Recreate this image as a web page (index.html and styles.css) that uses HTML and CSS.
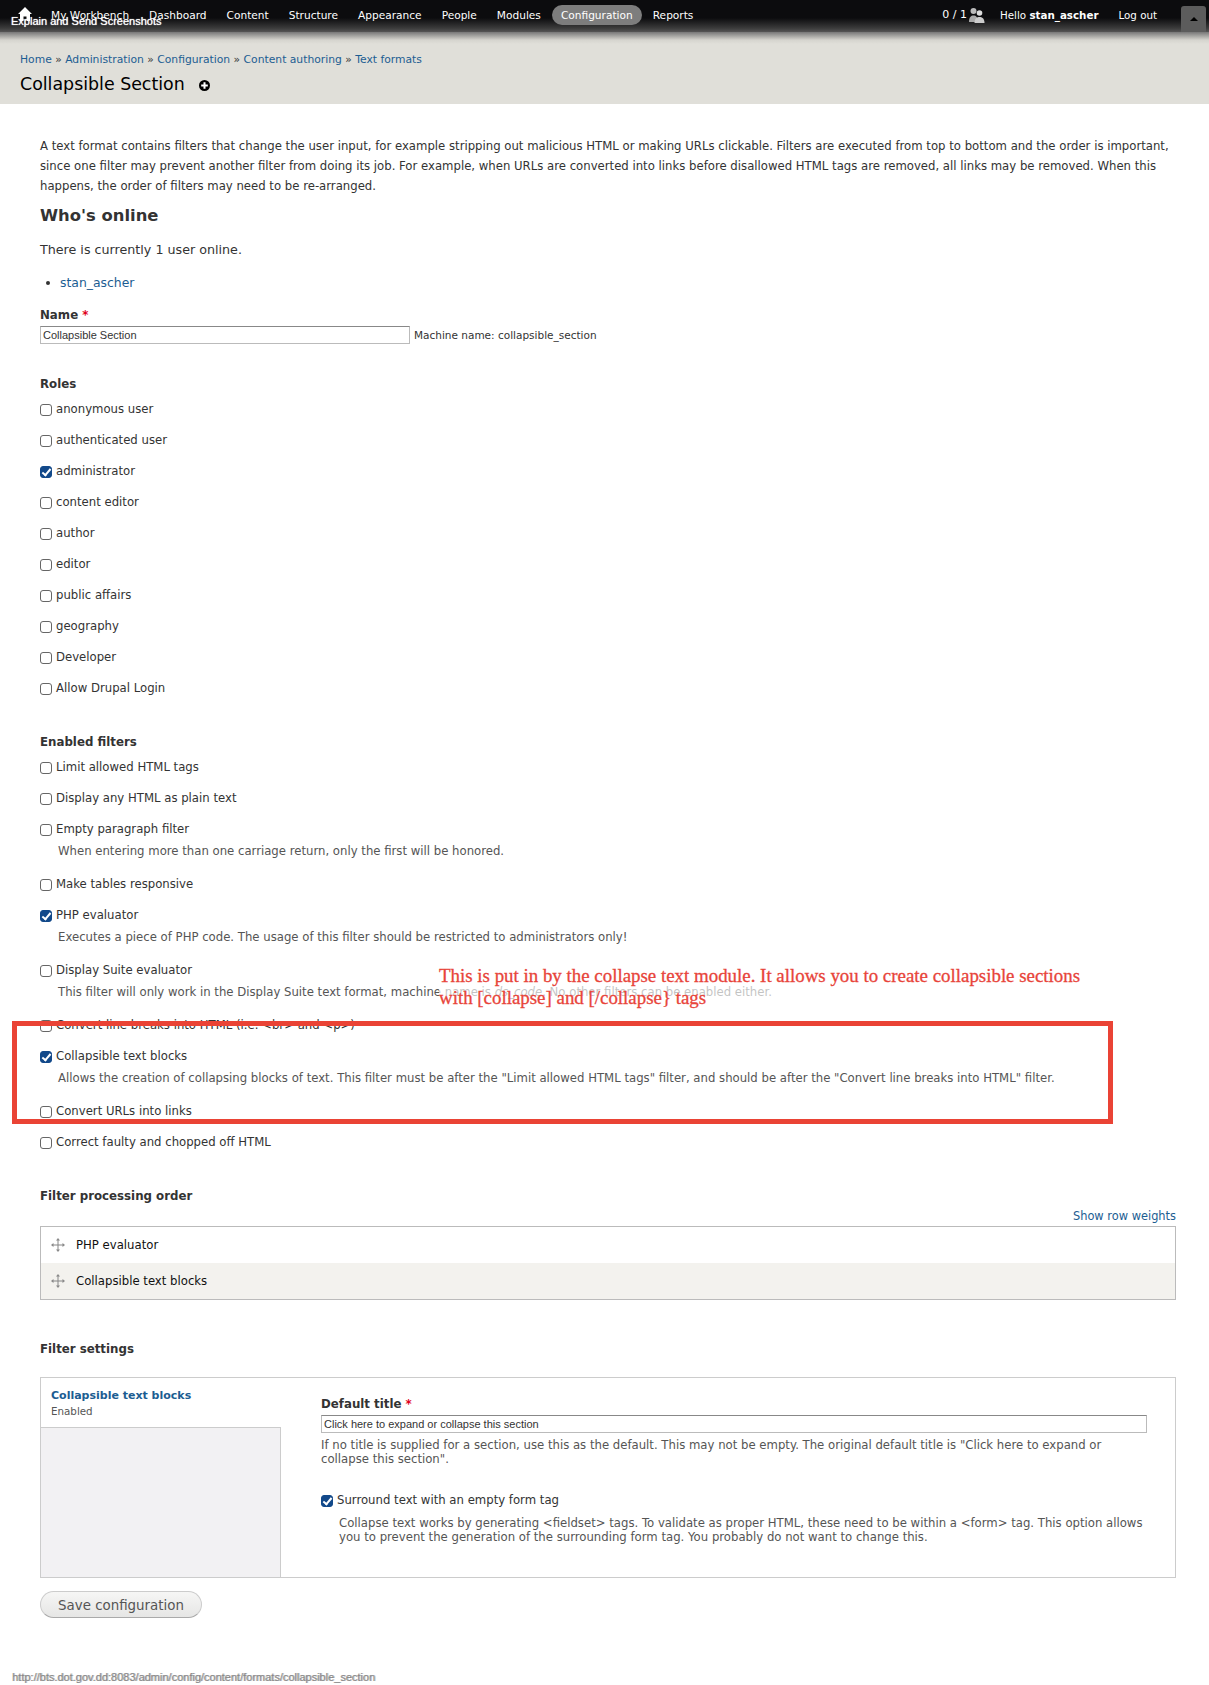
FILE: index.html
```html
<!DOCTYPE html>
<html lang="en">

<head>
    <meta charset="UTF-8">
    <title>Collapsible Section</title>
    <link rel="stylesheet" href="styles.css">
</head>

<body>

    <!-- toolbar -->
    <div class="toolbar">
        <a class="home" href="#"><svg width="16" height="16" viewBox="0 0 16 16"><path fill="#fff" d="M8 1 15 8 13 8 13 15 9.500 15 9.500 10.500 6.500 10.500 6.500 15 3 15 3 8 1 8Z"/></svg></a>
        <ul class="nav">
            <li><a href="#">My Workbench</a></li>
            <li><a href="#">Dashboard</a></li>
            <li><a href="#">Content</a></li>
            <li><a href="#">Structure</a></li>
            <li><a href="#">Appearance</a></li>
            <li><a href="#">People</a></li>
            <li><a href="#">Modules</a></li>
            <li><a class="active" href="#">Configuration</a></li>
            <li><a href="#">Reports</a></li>
        </ul>
        <div class="user-links">
            <span class="count">0 / 1<svg width="17" height="16" viewBox="0 0 17 16"><circle cx="5.500" cy="4" r="3" fill="#bbb"/><path fill="#aaa" d="M1 15C1 10 3 8.500 5.500 8.500S10 10 10 15Z"/><circle cx="11.500" cy="6" r="2.800" fill="#ddd"/><path fill="#ccc" d="M6.500 16C6.500 11.500 9 10 11.500 10S16.500 11.500 16.500 16Z"/></svg></span>
            <a href="#">Hello <b>stan_ascher</b></a>
            <a href="#">Log out</a>
        </div>
        <div class="toggle"><span class="arrow"></span></div>
    </div>
    <div class="explain">Explain and Send Screenshots</div>

    <!-- page title -->
    <div class="head">
        <div class="crumbs"><a href="#">Home</a> » <a href="#">Administration</a> » <a href="#">Configuration</a> » <a href="#">Content authoring</a> » <a href="#">Text formats</a></div>
        <h1>Collapsible Section <svg class="shortcut" width="11" height="11" viewBox="0 0 11 11"><circle cx="5.500" cy="5.500" r="5.500" fill="#000"/><path fill="#fff" d="M4.500 2.200h2v2.300h2.300v2H6.500v2.300h-2V6.500H2.200v-2h2.300Z"/></svg></h1>
    </div>

    <div class="content">
        <p class="intro">A text format contains filters that change the user input, for example stripping out malicious HTML or making URLs clickable. Filters are executed from top to bottom and the order is important, since one filter may prevent another filter from doing its job. For example, when URLs are converted into links before disallowed HTML tags are removed, all links may be removed. When this happens, the order of filters may need to be re-arranged.</p>

        <h2>Who's online</h2>
        <p class="online">There is currently 1 user online.</p>
        <ul class="users">
            <li><a href="#">stan_ascher</a></li>
        </ul>

        <label class="title name-title">Name <span class="req">*</span></label>
        <div class="name-row">
            <input class="text name-input" type="text" value="Collapsible Section">
            <span class="machine">Machine name: collapsible_section</span>
        </div>

        <div class="title roles-title">Roles</div>
        <div class="checks">
            <label class="check"><input type="checkbox">anonymous user</label>
            <label class="check"><input type="checkbox">authenticated user</label>
            <label class="check"><input type="checkbox" checked>administrator</label>
            <label class="check"><input type="checkbox">content editor</label>
            <label class="check"><input type="checkbox">author</label>
            <label class="check"><input type="checkbox">editor</label>
            <label class="check"><input type="checkbox">public affairs</label>
            <label class="check"><input type="checkbox">geography</label>
            <label class="check"><input type="checkbox">Developer</label>
            <label class="check"><input type="checkbox">Allow Drupal Login</label>
        </div>

        <div class="title filters-title">Enabled filters</div>
        <div class="checks">
            <label class="check"><input type="checkbox">Limit allowed HTML tags</label>
            <label class="check"><input type="checkbox">Display any HTML as plain text</label>
            <label class="check has-desc"><input type="checkbox">Empty paragraph filter</label>
            <div class="desc">When entering more than one carriage return, only the first will be honored.</div>
            <label class="check"><input type="checkbox">Make tables responsive</label>
            <label class="check has-desc"><input type="checkbox" checked>PHP evaluator</label>
            <div class="desc">Executes a piece of PHP code. The usage of this filter should be restricted to administrators only!</div>
            <label class="check has-desc"><input type="checkbox">Display Suite evaluator</label>
            <div class="desc">This filter will only work in the Display Suite text format, machine name is <em>ds_code</em>. No other filters can be enabled either.</div>
            <label class="check"><input type="checkbox">Convert line breaks into HTML (i.e. &lt;br&gt; and &lt;p&gt;)</label>
            <label class="check has-desc"><input type="checkbox" checked>Collapsible text blocks</label>
            <div class="desc">Allows the creation of collapsing blocks of text. This filter must be after the "Limit allowed HTML tags" filter, and should be after the "Convert line breaks into HTML" filter.</div>
            <label class="check"><input type="checkbox">Convert URLs into links</label>
            <label class="check"><input type="checkbox">Correct faulty and chopped off HTML</label>
        </div>

        <div class="title order-title">Filter processing order</div>
        <div class="weights"><a href="#">Show row weights</a></div>
        <div class="order">
            <div class="row">
                <svg class="drag" width="14" height="14" viewBox="0 0 14 14"><path fill="#888" d="M7 0 9 2.500H7.500V6.500H11.500V5L14 7 11.500 9V7.500H7.500V11.500H9L7 14 5 11.500H6.500V7.500H2.500V9L0 7 2.500 5V6.500H6.500V2.500H5Z"/></svg>
                PHP evaluator
            </div>
            <div class="row even">
                <svg class="drag" width="14" height="14" viewBox="0 0 14 14"><path fill="#888" d="M7 0 9 2.500H7.500V6.500H11.500V5L14 7 11.500 9V7.500H7.500V11.500H9L7 14 5 11.500H6.500V7.500H2.500V9L0 7 2.500 5V6.500H6.500V2.500H5Z"/></svg>
                Collapsible text blocks
            </div>
        </div>

        <div class="title settings-title">Filter settings</div>
        <div class="settings">
            <div class="tabs">
                <div class="tab">
                    <a href="#">Collapsible text blocks</a>
                    <span>Enabled</span>
                </div>
                <div class="tab-fill"></div>
            </div>
            <div class="pane">
                <label class="title">Default title <span class="req">*</span></label>
                <input class="text title-input" type="text" value="Click here to expand or collapse this section">
                <div class="small">If no title is supplied for a section, use this as the default. This may not be empty. The original default title is "Click here to expand or collapse this section".</div>
                <label class="check pane-check"><input type="checkbox" checked>Surround text with an empty form tag</label>
                <div class="small pane-desc">Collapse text works by generating &lt;fieldset&gt; tags. To validate as proper HTML, these need to be within a &lt;form&gt; tag. This option allows you to prevent the generation of the surrounding form tag. You probably do not want to change this.</div>
            </div>
        </div>

        <button class="save" type="button">Save configuration</button>
    </div>

    <!-- annotation on top of the screenshot -->
    <div class="note">This is put in by the collapse text module. It allows you to create collapsible sections<br>with [collapse] and [/collapse} tags</div>
    <div class="redbox"></div>

    <div class="status">http://bts.dot.gov.dd:8083/admin/config/content/formats/collapsible_section</div>

</body>

</html>
```

FILE: styles.css
```css
* {
    padding: 0;
    margin: 0;
    list-style: none;
    box-sizing: border-box;
}

html,
body {
    height: 1685px;
    overflow: hidden;
}

body {
    position: relative;
    background: #fff;
    color: #333;
    font-family: "DejaVu Sans", sans-serif;
    font-size: 11.7px;
    line-height: 20px;
}

a {
    color: #1c5d92;
    text-decoration: none;
}

/* toolbar */
.toolbar {
    display: flex;
    align-items: center;
    height: 32px;
    padding-left: 17px;
    background: linear-gradient(#0c0c0e 0, #0c0c0e 18px, #3a3a3a 28px, #555 32px);
    color: #fff;
    font-size: 10.6px;
}

.toolbar a {
    color: #fff;
}

.home {
    display: flex;
    margin-right: 9px;
    margin-top: -4px;
}

.nav {
    display: flex;
    align-items: center;
    margin-top: -2px;
}

.nav li a {
    display: block;
    height: 20px;
    line-height: 20px;
    padding: 0 9px;
    margin-right: 2px;
    border-radius: 10px;
}

.nav li a.active {
    background: #7d7d7d;
}

.user-links {
    display: flex;
    align-items: center;
    gap: 20px;
    margin-left: auto;
    margin-top: -2px;
    margin-right: 24px;
    font-size: 10.3px;
}

.count {
    display: flex;
    align-items: center;
    gap: 1px;
    margin-right: -5px;
    font-size: 11px;
    white-space: pre;
}

.toggle {
    display: flex;
    align-items: center;
    justify-content: center;
    width: 25px;
    height: 26px;
    margin-right: 3px;
    margin-top: 6px;
    background: #5c5c5c;
    border-radius: 3px 3px 0 0;
}

.arrow {
    border-left: 4px solid transparent;
    border-right: 4px solid transparent;
    border-bottom: 4px solid #000;
}

.explain {
    position: absolute;
    left: 11px;
    top: 13px;
    color: #fff;
    font-family: "Liberation Sans", sans-serif;
    font-size: 11px;
    line-height: 16px;
    text-shadow: 0 0 1px #fff;
}

/* page title */
.head {
    height: 72px;
    padding: 18px 20px 0;
    background: linear-gradient(#777 0, #d5d4ce 8px, #e0dfd9 12px);
}

.crumbs {
    font-size: 10.75px;
    color: #333;
}

h1 {
    margin-top: 2px;
    font-size: 17.4px;
    font-weight: normal;
    line-height: 24px;
    color: #000;
}

.shortcut {
    margin-left: 9px;
    vertical-align: -1px;
}

/* main form */
.content {
    padding: 32px 33px 0 40px;
}

.intro {
    width: 1136px;
}

h2 {
    margin-top: 9px;
    font-size: 16.4px;
    line-height: 22px;
}

.online {
    margin-top: 13px;
    font-size: 12.7px;
}

.users {
    margin-top: 13px;
    padding-left: 20px;
    font-size: 12.4px;
}

.users li {
    position: relative;
}

.users li::before {
    content: "";
    position: absolute;
    left: -14px;
    top: 8px;
    width: 4px;
    height: 4px;
    border-radius: 50%;
    background: #333;
}

.title {
    display: block;
    font-weight: bold;
    font-size: 11.8px;
}

.req {
    color: #e0001c;
}

.name-title {
    margin-top: 12px;
}

.name-row {
    display: flex;
    align-items: center;
    gap: 4px;
    font-size: 10.5px;
}

.text {
    height: 18px;
    padding: 0 2px;
    border: 1px solid #bbb;
    border-top-color: #888;
    color: #333;
    font-family: "Liberation Sans", sans-serif;
    font-size: 11px;
}

.name-input {
    width: 370px;
}

.roles-title {
    margin-top: 29px;
}

.checks {
    margin-top: 5px;
}

.check {
    display: flex;
    align-items: center;
    height: 20px;
    margin-bottom: 11px;
    gap: 4px;
}

.check.has-desc {
    margin-bottom: 2px;
}

.check input {
    appearance: none;
    position: relative;
    flex: none;
    width: 12px;
    height: 12px;
    margin-top: 2px;
    border: 1px solid #666;
    border-radius: 3px;
    background: #fff;
}

.check input:checked {
    border-color: #12498a;
    background: #12498a;
}

.check input:checked::after {
    content: "";
    position: absolute;
    left: 3px;
    top: 0;
    width: 3px;
    height: 7px;
    border: solid #fff;
    border-width: 0 2px 2px 0;
    transform: rotate(40deg);
}

.desc {
    height: 20px;
    margin: 0 0 13px 18px;
    color: #555;
}

.filters-title {
    margin-top: 34px;
}

.order-title {
    margin-top: 34px;
}

.weights {
    text-align: right;
    font-size: 11.4px;
}

.order {
    border: 1px solid #bbb;
}

.row {
    display: flex;
    align-items: center;
    gap: 11px;
    height: 36px;
    padding-left: 10px;
    color: #111;
}

.row.even {
    background: #f3f2ee;
}

.settings-title {
    margin-top: 39px;
}

.settings {
    display: flex;
    height: 201px;
    margin-top: 18px;
    border: 1px solid #ccc;
}

.tabs {
    display: flex;
    flex-direction: column;
    flex: none;
    width: 240px;
}

.tab {
    height: 49px;
    padding: 9px 10px 0;
}

.tab a {
    display: block;
    font-size: 11px;
    font-weight: bold;
    line-height: 18px;
}

.tab span {
    display: block;
    font-size: 10.3px;
    line-height: 13px;
    color: #555;
}

.tab-fill {
    flex: 1;
    background: #f2f1f3;
    border-top: 1px solid #ccc;
    border-right: 1px solid #ccc;
}

.pane {
    flex: 1;
    padding: 16px 28px 0 40px;
}

.title-input {
    display: block;
    width: 826px;
    margin-top: 1px;
}

.small {
    margin-top: 5px;
    line-height: 14px;
    color: #555;
}

.pane-check {
    margin: 24px 0 0;
}

.pane-desc {
    margin-top: 6px;
    margin-left: 18px;
}

.save {
    display: block;
    width: 162px;
    height: 27px;
    margin-top: 13px;
    padding-top: 1px;
    border: 1px solid #ccc;
    border-bottom-color: #aaa;
    border-radius: 14px;
    background: linear-gradient(#f6f6f5, #e6e6e5);
    color: #555;
    font-family: "DejaVu Sans", sans-serif;
    font-size: 13.4px;
}

/* annotation */
.note {
    position: absolute;
    left: 439px;
    top: 965px;
    background: rgba(255, 255, 255, 0.65);
    color: #e8443a;
    font-family: "Liberation Serif", serif;
    font-size: 18.9px;
    line-height: 22px;
    -webkit-text-stroke: 0.3px #e8443a;
}

.redbox {
    position: absolute;
    left: 12px;
    top: 1021px;
    width: 1101px;
    height: 103px;
    border: 5px solid #ea4335;
}

.status {
    position: absolute;
    left: 12px;
    top: 1669px;
    color: #888;
    font-family: "Liberation Sans", sans-serif;
    font-size: 11px;
    line-height: 16px;
    text-shadow: 1px 0 0 #bbb;
}
```
